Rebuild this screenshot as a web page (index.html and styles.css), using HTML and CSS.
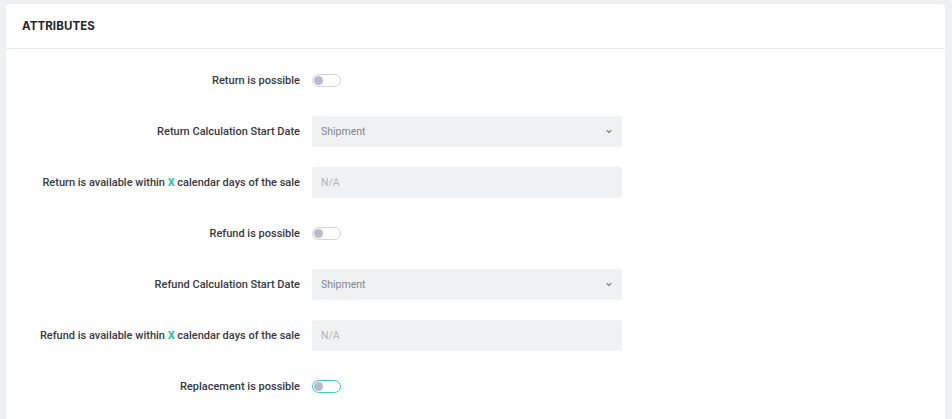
FILE: index.html
```html
<!DOCTYPE html>
<html lang="en">
<head>
<meta charset="utf-8">
<title>Attributes</title>
<link rel="stylesheet" href="styles.css">
</head>
<body>
<section class="card">
  <header class="card-head">
    <h2 class="card-title">ATTRIBUTES</h2>
  </header>
  <div class="form">
    <div class="row">
      <label class="label">Return is possible</label>
      <div class="control"><span class="toggle"><span class="knob"></span></span></div>
    </div>
    <div class="row">
      <label class="label">Return Calculation Start Date</label>
      <div class="control">
        <div class="field select">
          <span class="value">Shipment</span>
          <svg class="chevron" width="6" height="5" viewBox="0 0 6 5"><path d="M1 1.5 L3 3.5 L5 1.5" fill="none" stroke="#8a8c94" stroke-width="1.3" stroke-linecap="round" stroke-linejoin="round"/></svg>
        </div>
      </div>
    </div>
    <div class="row">
      <label class="label">Return is available within <span class="accent">X</span> calendar days of the sale</label>
      <div class="control"><div class="field"><span class="placeholder">N/A</span></div></div>
    </div>
    <div class="row">
      <label class="label">Refund is possible</label>
      <div class="control"><span class="toggle"><span class="knob"></span></span></div>
    </div>
    <div class="row">
      <label class="label">Refund Calculation Start Date</label>
      <div class="control">
        <div class="field select">
          <span class="value">Shipment</span>
          <svg class="chevron" width="6" height="5" viewBox="0 0 6 5"><path d="M1 1.5 L3 3.5 L5 1.5" fill="none" stroke="#8a8c94" stroke-width="1.3" stroke-linecap="round" stroke-linejoin="round"/></svg>
        </div>
      </div>
    </div>
    <div class="row">
      <label class="label">Refund is available within <span class="accent">X</span> calendar days of the sale</label>
      <div class="control"><div class="field"><span class="placeholder">N/A</span></div></div>
    </div>
    <div class="row">
      <label class="label">Replacement is possible</label>
      <div class="control"><span class="toggle focused"><span class="knob"></span></span></div>
    </div>
  </div>
</section>
</body>
</html>
```
FILE: styles.css
```css
html, body {
  margin: 0;
  padding: 0;
}

body {
  background: #eff0f2;
  font-family: "Roboto", "Inter", sans-serif;
  color: #34353b;
  padding: 4px 7px 0 6px;
  height: 419px;
  box-sizing: border-box;
  overflow: hidden;
}

.card {
  background: #ffffff;
  border-radius: 4px 4px 0 0;
  height: 100%;
}

.card-head {
  height: 44px;
  border-bottom: 1px solid #e8e9ec;
  display: flex;
  align-items: center;
  padding: 0 16px;
}

.card-title {
  margin: 0;
  font-family: "Inter", "Roboto", sans-serif;
  font-size: 11.5px;
  font-weight: 700;
  letter-spacing: 0.1px;
  color: #26272c;
}

.form {
  padding-top: 16px;
  display: flex;
  flex-direction: column;
  gap: 20px;
}

.row {
  display: grid;
  grid-template-columns: 294px 310px;
  column-gap: 12px;
  align-items: center;
  height: 31px;
}

.label {
  text-align: right;
  font-size: 11px;
  font-weight: 500;
  color: #383940;
  white-space: nowrap;
}

.accent {
  color: #2cc2b0;
  font-weight: 700;
}

.control {
  display: flex;
  align-items: center;
}

.toggle {
  width: 25px;
  height: 11px;
  border: 1px solid #d3d4da;
  border-radius: 7px;
  display: flex;
  align-items: center;
  padding: 0 1px;
  background: #ffffff;
}

.toggle.focused {
  border-color: #3fcabb;
}

.knob {
  width: 9px;
  height: 9px;
  border-radius: 50%;
  background: #b9bacb;
}

.field {
  width: 310px;
  height: 31px;
  box-sizing: border-box;
  background: #f0f1f3;
  border-radius: 3px;
  display: flex;
  align-items: center;
  justify-content: space-between;
  padding: 0 10px 0 9px;
  font-size: 10.5px;
}

.value {
  color: #85878f;
}

.placeholder {
  color: #b4b5bc;
}

.chevron {
  display: block;
}
```
